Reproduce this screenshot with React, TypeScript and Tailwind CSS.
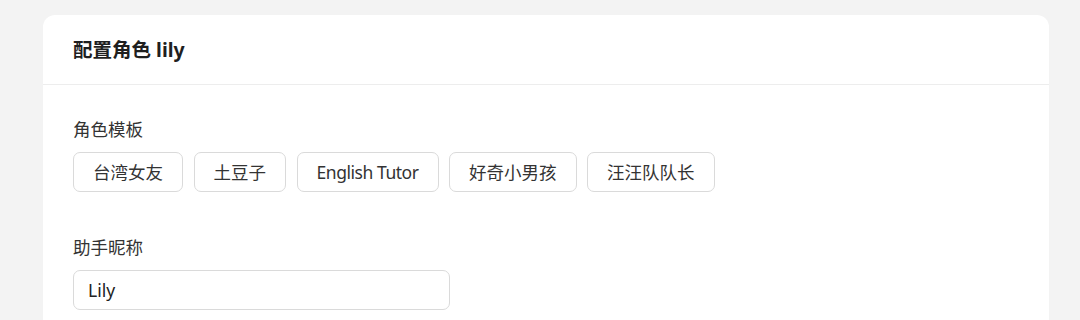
import React from "react";

const font = { fontFamily: '"Noto Sans", "Noto Sans CJK SC", sans-serif' };

export default function App() {
  const templates = ["台湾女友", "土豆子", "English Tutor", "好奇小男孩", "汪汪队队长"];
  return (
    <div className="min-h-[320px] w-[1080px] bg-[#f3f3f3] pt-[15px] pl-[43px] pr-[31px]" style={font}>
      <div className="rounded-t-[12px] bg-white">
        <div className="flex h-[70px] items-center border-b border-[#ededed] px-[30px]">
          <h1 className="text-[19.5px] font-bold text-[#1f1f1f]">配置角色 lily</h1>
        </div>
        <div className="px-[30px] pt-[31px] pb-[20px]">
          <div className="text-[17.5px] leading-[26px] text-[#333]">角色模板</div>
          <div className="mt-[10px] flex gap-[10.5px]">
            {templates.map((t) => (
              <button
                key={t}
                className={
                  "h-[40px] rounded-[7px] border border-[#dadada] bg-white px-[19px] text-[17.5px] text-[#333] " +
                  (t === "English Tutor" ? "tracking-[-0.45px]" : "")
                }
              >
                {t}
              </button>
            ))}
          </div>
          <div className="mt-[42px] text-[17.5px] leading-[26px] text-[#333]">助手昵称</div>
          <input
            defaultValue="Lily"
            className="mt-[10px] h-[40px] w-[377px] rounded-[7px] border border-[#dadada] px-[14px] text-[17.5px] text-[#222] outline-none"
          />
        </div>
      </div>
    </div>
  );
}
